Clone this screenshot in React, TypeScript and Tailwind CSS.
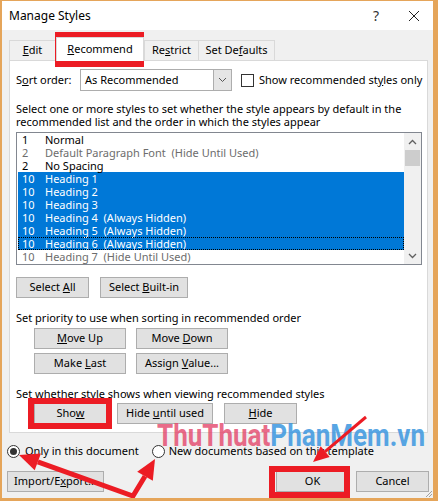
import React from "react";

const rows = [
  { n: "1", name: "Normal", tone: "black" },
  { n: "2", name: "Default Paragraph Font  (Hide Until Used)", tone: "gray" },
  { n: "2", name: "No Spacing", tone: "black" },
  { n: "10", name: "Heading 1", tone: "sel" },
  { n: "10", name: "Heading 2", tone: "sel" },
  { n: "10", name: "Heading 3", tone: "sel" },
  { n: "10", name: "Heading 4  (Always Hidden)", tone: "sel" },
  { n: "10", name: "Heading 5  (Always Hidden)", tone: "sel" },
  { n: "10", name: "Heading 6  (Always Hidden)", tone: "focus" },
  { n: "10", name: "Heading 7  (Hide Until Used)", tone: "gray" },
];

const Btn: React.FC<{ className?: string; children: React.ReactNode }> = ({ className = "", children }) => (
  <div
    className={
      "flex items-center justify-center border border-[#adadad] bg-[#e1e1e1] text-[#000] whitespace-pre " + className
    }
  >
    {children}
  </div>
);

const Tab: React.FC<{ active?: boolean; className?: string; children: React.ReactNode }> = ({
  active,
  className = "",
  children,
}) =>
  active ? (
    <div
      className={
        "relative z-10 -mb-px flex h-[24px] items-center justify-center border border-b-0 border-[#d9d9d9] bg-white " +
        className
      }
    >
      {children}
    </div>
  ) : (
    <div
      className={
        "flex h-[20px] items-center justify-center border border-b-0 border-[#d9d9d9] bg-[#f0f0f0] " + className
      }
    >
      {children}
    </div>
  );

const Radio: React.FC<{ checked?: boolean }> = ({ checked }) => (
  <div className="flex h-[13px] w-[13px] items-center justify-center rounded-full border border-[#333] bg-white">
    {checked && <div className="h-[7px] w-[7px] rounded-full bg-[#333]" />}
  </div>
);

export default function App() {
  return (
    <div className="relative h-[501px] w-[438px] overflow-hidden border-l-2 border-r-[5px] border-t border-b-[3px] border-[#e5a55a] bg-[#f0f0f0] font-['Segoe_UI','Noto_Sans',sans-serif] text-[11px] text-[#000]">
      {/* Title bar */}
      <div className="flex h-[29px] items-center bg-white pl-[7px]">
        <span className="text-[12px]">Manage Styles</span>
        <span className="ml-auto mr-[29px] text-[14px] text-[#333]">?</span>
        <svg width="12" height="12" viewBox="0 0 12 12" className="mr-[13px]">
          <path d="M1 1 L11 11 M11 1 L1 11" stroke="#222" strokeWidth="1" />
        </svg>
      </div>

      {/* Tabs */}
      <div className="flex h-[30px] items-end pl-[7px]">
        <Tab className="w-[47px]">
          <span><u>E</u>dit</span>
        </Tab>
        <Tab active className="w-[88px]">
          <span><u>R</u>ecommend</span>
        </Tab>
        <Tab className="w-[55px]">
          <span>Re<u>s</u>trict</span>
        </Tab>
        <Tab className="w-[77px] -ml-px">
          <span>Set De<u>f</u>aults</span>
        </Tab>
      </div>

      {/* Panel */}
      <div className="ml-[7px] h-[373px] w-[419px] border border-[#d9d9d9] bg-white">
        <div className="mt-[8px] flex h-[22px] items-center whitespace-nowrap">
          <span className="ml-[6px] w-[64px]">S<u>o</u>rt order:</span>
          <div className="flex h-[22px] w-[152px] items-center border border-[#adadad] bg-white">
            <span className="ml-[4px]">As Recommended</span>
            <div className="ml-auto flex h-full w-[18px] items-center justify-center border-l border-[#adadad] bg-[#e5e5e5]">
              <svg width="9" height="6" viewBox="0 0 9 6">
                <path d="M1 1 L4.5 4.5 L8 1" fill="none" stroke="#555" strokeWidth="1" />
              </svg>
            </div>
          </div>
          <div className="ml-[9px] h-[13px] w-[13px] shrink-0 border border-[#333] bg-white" />
          <span className="ml-[5px]">Show recommended st<u>y</u>les only</span>
        </div>

        <div className="ml-[6px] mt-[11px] whitespace-nowrap leading-[13px]">
          Select one or more styles to set whether the style appears by default in the
          <br />
          recommended list and the order in which the styles appear
        </div>

        {/* Style list */}
        <div className="ml-[6px] mt-[4px] flex h-[133px] w-[406px] border border-[#828790] bg-white">
          <div className="flex-1 pl-px">
            {rows.map((r, i) => {
              const sel = r.tone === "sel" || r.tone === "focus";
              return (
                <div
                  key={i}
                  className={
                    "flex h-[13px] items-center leading-[13px] " +
                    (sel ? "bg-[#0078d7] text-white " : "") +
                    (r.tone === "gray" ? "text-[#6d6d6d] " : "") +
                    (r.tone === "focus" ? "outline-1 outline-dotted outline-[#000] -outline-offset-1" : "")
                  }
                >
                  <span className="w-[27px] pl-[4px]">{r.n}</span>
                  <span className="whitespace-pre">{r.name}</span>
                </div>
              );
            })}
          </div>
          <div className="flex w-[17px] flex-col items-center bg-[#f0f0f0]">
            <div className="flex h-[17px] w-full items-center justify-center">
              <svg width="9" height="6" viewBox="0 0 9 6">
                <path d="M1 5 L4.5 1.5 L8 5" fill="none" stroke="#606060" strokeWidth="1.3" />
              </svg>
            </div>
            <div className="h-[16px] w-[15px] bg-[#cdcdcd]" />
            <div className="mt-auto flex h-[17px] w-full items-center justify-center">
              <svg width="9" height="6" viewBox="0 0 9 6">
                <path d="M1 1 L4.5 4.5 L8 1" fill="none" stroke="#606060" strokeWidth="1.3" />
              </svg>
            </div>
          </div>
        </div>

        <div className="mt-[12px] flex">
          <Btn className="ml-[6px] h-[21px] w-[73px]">
            <span>Select <u>A</u>ll</span>
          </Btn>
          <Btn className="ml-[11px] h-[21px] w-[88px]">
            <span>Select <u>B</u>uilt-in</span>
          </Btn>
        </div>

        <div className="ml-[6px] mt-[13px] leading-[13px]">Set priority to use when sorting in recommended order</div>
        <div className="mt-[4px] flex">
          <Btn className="ml-[24px] h-[21px] w-[92px]">
            <span><u>M</u>ove Up</span>
          </Btn>
          <Btn className="ml-[10px] h-[21px] w-[92px]">
            <span>Move <u>D</u>own</span>
          </Btn>
        </div>
        <div className="mt-[4px] flex">
          <Btn className="ml-[24px] h-[21px] w-[92px]">
            <span>Make <u>L</u>ast</span>
          </Btn>
          <Btn className="ml-[10px] h-[21px] w-[92px]">
            <span>Assign <u>V</u>alue...</span>
          </Btn>
        </div>

        <div className="ml-[6px] mt-[13px] leading-[13px]">Set whether style shows when viewing recommended styles</div>
        <div className="mt-[3px] flex">
          <Btn className="ml-[24px] h-[21px] w-[73px]">
            <span>Sho<u>w</u></span>
          </Btn>
          <Btn className="ml-[10px] h-[21px] w-[96px]">
            <span>Hide <u>u</u>ntil used</span>
          </Btn>
          <Btn className="ml-[11px] h-[21px] w-[73px]">
            <span><u>H</u>ide</span>
          </Btn>
        </div>
      </div>

      {/* Radio options */}
      <div className="mt-[11px] flex h-[14px] items-center whitespace-nowrap">
        <div className="ml-[5px]">
          <Radio checked />
        </div>
        <span className="ml-[5px]">Only in this document</span>
        <div className="ml-[13px]">
          <Radio />
        </div>
        <span className="ml-[4px]">New documents based on this template</span>
      </div>

      {/* Bottom buttons */}
      <div className="mt-[13px] flex">
        <Btn className="ml-[5px] h-[21px] w-[97px]">
          <span>Import/E<u>x</u>port...</span>
        </Btn>
        <Btn className="ml-auto h-[21px] w-[73px]">
          <span>OK</span>
        </Btn>
        <Btn className="ml-[7px] mr-[4px] h-[21px] w-[73px]">
          <span>Cancel</span>
        </Btn>
      </div>

      {/* Resize grip */}
      <svg width="10" height="10" viewBox="0 0 10 10" className="absolute bottom-0 right-0">
        <path d="M9 3 L3 9 M9 6 L6 9" stroke="#a0a0a0" strokeWidth="1" />
      </svg>

      {/* Watermark */}
      <div className="pointer-events-none absolute left-[155px] top-[417px] origin-left scale-x-[0.84] whitespace-nowrap font-['Roboto',sans-serif] text-[31px] font-bold leading-[36px]">
        <span className="text-[#e4486c] opacity-80">ThuThuat</span>
        <span className="text-[#3c97e0] opacity-85">PhanMem.vn</span>
      </div>

      {/* Red highlight boxes */}
      <div className="pointer-events-none absolute left-[53px] top-[31px] h-[35px] w-[89px] border-[6px] border-[#ec1c24]" />
      <div className="pointer-events-none absolute left-[26px] top-[397px] h-[31px] w-[84px] border-[6px] border-[#ec1c24]" />
      <div className="pointer-events-none absolute left-[267px] top-[465px] h-[32px] w-[81px] border-[6px] border-[#ec1c24]" />

      {/* Red arrows */}
      <svg width="438" height="501" viewBox="0 0 438 501" className="pointer-events-none absolute -left-[2px] -top-px">
        <polyline points="37.8,461.9 133,496 145,476.3" fill="none" stroke="#ec1c24" strokeWidth="5" strokeLinejoin="miter" />
        <polygon points="19,455 40.9,453.5 34.7,470.3" fill="#ec1c24" />
        <polygon points="155,459 152.8,480.8 137.2,471.8" fill="#ec1c24" />
        <line x1="366" y1="417" x2="325" y2="451.6" stroke="#ec1c24" strokeWidth="3" />
        <polygon points="313,462 329.7,456.9 320.7,446.3" fill="#ec1c24" />
      </svg>
    </div>
  );
}
